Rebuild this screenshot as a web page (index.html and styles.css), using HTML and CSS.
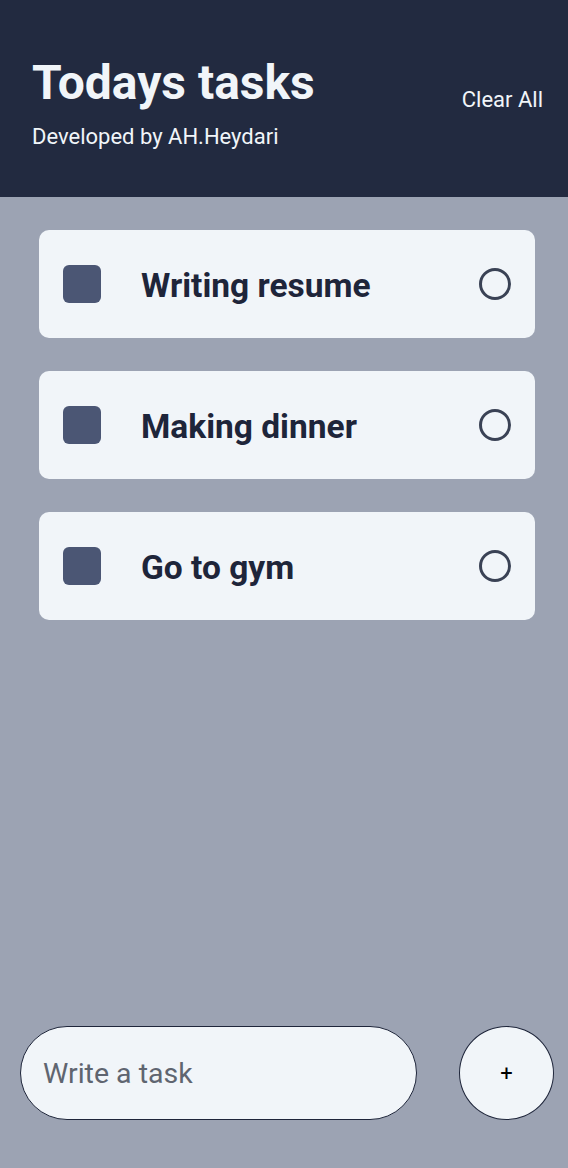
FILE: index.html
```html
<!DOCTYPE html>
<html>
<head>
<meta charset="utf-8">
<link rel="stylesheet" href="styles.css">
</head>
<body>
<div class="app">
  <header class="header">
    <div class="titles">
      <h1 class="title">Todays tasks</h1>
      <p class="subtitle">Developed by AH.Heydari</p>
    </div>
    <button class="clear">Clear All</button>
  </header>
  <main class="list">
    <div class="card">
      <span class="square"></span>
      <span class="task">Writing resume</span>
      <span class="ring"></span>
    </div>
    <div class="card">
      <span class="square"></span>
      <span class="task">Making dinner</span>
      <span class="ring"></span>
    </div>
    <div class="card">
      <span class="square"></span>
      <span class="task">Go to gym</span>
      <span class="ring"></span>
    </div>
  </main>
  <footer class="composer">
    <input class="input" type="text" placeholder="Write a task">
    <button class="add">+</button>
  </footer>
</div>
</body>
</html>
```
FILE: styles.css
```css
* { box-sizing: border-box; }
html, body { margin: 0; padding: 0; }
body {
  font-family: Roboto, "Liberation Sans", sans-serif;
  background: #9ca3b3;
}
.app {
  height: 1168px;
  display: flex;
  flex-direction: column;
}
.header {
  height: 197px;
  background: #222a40;
  display: flex;
  align-items: flex-start;
  justify-content: space-between;
  padding: 55px 25px 0 32px;
}
.titles { display: flex; flex-direction: column; }
.title {
  margin: 0;
  color: #f1f5f9;
  font-size: 48px;
  font-weight: 700;
  line-height: 56px;
}
.subtitle {
  margin: 13px 0 0;
  color: #f1f5f9;
  font-size: 22px;
  line-height: 26px;
}
.clear {
  background: none;
  border: none;
  padding: 0;
  color: #f1f5f9;
  font-family: inherit;
  font-size: 22px;
  line-height: 26px;
  margin-top: 32px;
}
.list {
  flex: 1;
  display: flex;
  flex-direction: column;
  gap: 33px;
  padding: 33px 33px 0 39px;
}
.card {
  height: 108px;
  background: #f1f5f9;
  border-radius: 10px;
  display: flex;
  align-items: center;
  padding: 0 24px;
}
.square {
  width: 38px;
  height: 38px;
  border-radius: 6px;
  background: #4b5674;
  flex: none;
}
.task {
  flex: 1;
  margin-left: 40px;
  color: #1e253a;
  font-size: 33.5px;
  font-weight: 700;
  line-height: 40px;
  padding-top: 4px;
}
.ring {
  width: 32px;
  height: 32px;
  border: 3px solid #3a4255;
  border-radius: 50%;
  flex: none;
}
.composer {
  display: flex;
  align-items: center;
  justify-content: space-between;
  padding: 0 14px 48px 20px;
}
.input {
  width: 397px;
  height: 94px;
  border: 1.5px solid #1e253a;
  border-radius: 47px;
  background: #f1f5f9;
  padding: 0 22px;
  font-family: inherit;
  font-size: 28.5px;
  color: #1e253a;
  outline: none;
}
.input::placeholder { color: #5f6570; }
.add {
  width: 95px;
  height: 94px;
  border: 1.5px solid #1e253a;
  border-radius: 50%;
  background: #f1f5f9;
  font-family: inherit;
  font-size: 22px;
  color: #000;
  padding: 0;
}
```
